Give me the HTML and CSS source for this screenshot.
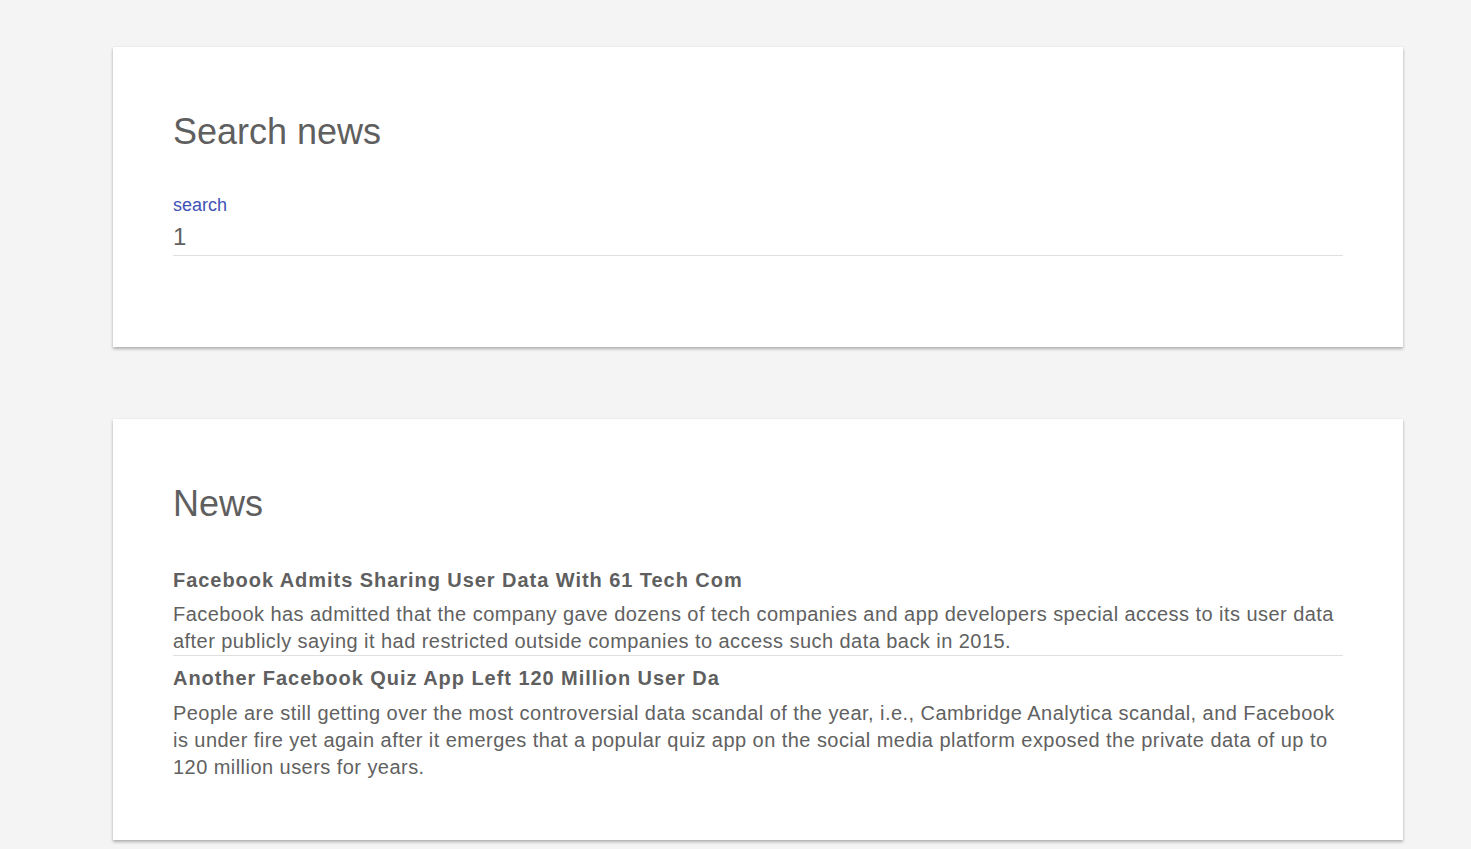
FILE: index.html
```html
<!DOCTYPE html>
<html lang="en">
<head>
<meta charset="utf-8">
<title>News</title>
<link rel="stylesheet" href="styles.css">
</head>
<body>
<main class="page">
  <section class="card">
    <h1 class="card-title">Search news</h1>
    <div class="field">
      <label class="field-label" for="q">search</label>
      <div class="field-input" id="q">1</div>
    </div>
  </section>
  <section class="card card-news">
    <h1 class="card-title">News</h1>
    <ul class="news-list">
      <li class="news-item">
        <h2 class="news-title">Facebook Admits Sharing User Data With 61 Tech Com</h2>
        <p class="news-body">Facebook has admitted that the company gave dozens of tech companies and app developers special access to its user data after publicly saying it had restricted outside companies to access such data back in 2015.</p>
      </li>
      <li class="news-item">
        <h2 class="news-title">Another Facebook Quiz App Left 120 Million User Da</h2>
        <p class="news-body">People are still getting over the most controversial data scandal of the year, i.e., Cambridge Analytica scandal, and Facebook is under fire yet again after it emerges that a popular quiz app on the social media platform exposed the private data of up to 120 million users for years.</p>
      </li>
    </ul>
  </section>
</main>
</body>
</html>
```

FILE: styles.css
```css
html, body {
  margin: 0;
  padding: 0;
  background: #f4f4f4;
  font-family: "Liberation Sans", Arial, sans-serif;
  color: #616161;
}

.page {
  display: flex;
  flex-direction: column;
  gap: 72px;
  padding: 47px 68px 20px 113px;
}

.card {
  background: #fff;
  padding: 60px;
  box-shadow: 0 2px 3px rgba(0, 0, 0, 0.28), 0 0 2px rgba(0, 0, 0, 0.06);
}

.card-news {
  padding-bottom: 59px;
}

.card-title {
  margin: 0;
  padding-top: 3px;
  font-size: 36px;
  font-weight: 400;
  line-height: 43px;
  color: #5f5f5f;
}

.field {
  margin-top: 42px;
  margin-bottom: 31px;
  display: flex;
  flex-direction: column;
}

.field-label {
  font-size: 18px;
  line-height: 21px;
  color: #3f51b5;
}

.field-input {
  margin-top: 7px;
  font-size: 24px;
  line-height: 28px;
  padding-bottom: 4px;
  border-bottom: 1px solid #e0e0e0;
  color: #616161;
}

.news-list {
  list-style: none;
  margin: 34px 0 0 0;
  padding: 0;
}

.news-item {
  padding-top: 9px;
}

.news-item + .news-item {
  padding-top: 10px;
  border-top: 1px solid #e0e0e0;
}

.news-title {
  margin: 0;
  font-size: 20px;
  line-height: 24px;
  font-weight: 700;
  letter-spacing: 0.95px;
  color: #5f5f5f;
}

.news-body {
  margin: 9px 0 0 0;
  font-size: 20px;
  line-height: 27px;
  letter-spacing: 0.45px;
  color: #616161;
}

.news-item + .news-item .news-body {
  margin-top: 10px;
}
```
